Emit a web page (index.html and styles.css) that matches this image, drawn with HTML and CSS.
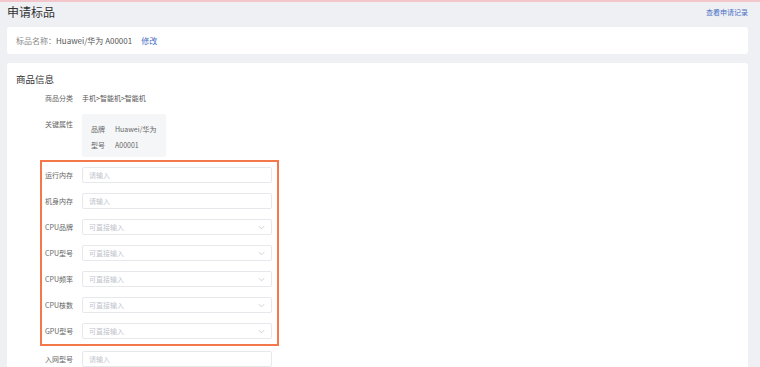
FILE: index.html
```html
<!DOCTYPE html>
<html lang="zh-CN">
<head>
    <meta charset="UTF-8">
    <meta name="viewport" content="width=device-width, initial-scale=1.0">
    <title>申请标品</title>
    <link rel="stylesheet" href="styles.css">
</head>
<body>
    <div class="page">
        <div class="page-header">
            <h1>申请标品</h1>
            <a href="#" class="history-link">查看申请记录</a>
        </div>

        <div class="card name-card">
            <span class="muted">标品名称：</span>
            <span class="value">Huawei/华为 A00001</span>
            <a href="#" class="edit-link">修改</a>
        </div>

        <div class="card info-card">
            <h2>商品信息</h2>

            <div class="form">
                <div class="row row-text">
                    <span class="label">商品分类</span>
                    <span class="value">手机&gt;智能机&gt;智能机</span>
                </div>

                <div class="row row-attrs">
                    <span class="label">关键属性</span>
                    <div class="attr-box">
                        <div class="attr"><span class="attr-name">品牌</span><span>Huawei/华为</span></div>
                        <div class="attr"><span class="attr-name">型号</span><span>A00001</span></div>
                    </div>
                </div>

                <div class="highlight">
                    <div class="row">
                        <label class="label">运行内存</label>
                        <input type="text" placeholder="请输入">
                    </div>
                    <div class="row">
                        <label class="label">机身内存</label>
                        <input type="text" placeholder="请输入">
                    </div>
                    <div class="row">
                        <label class="label">CPU品牌</label>
                        <div class="select"><span>可直接输入</span><svg viewBox="0 0 8 5"><path d="M1 1l3 3 3-3"/></svg></div>
                    </div>
                    <div class="row">
                        <label class="label">CPU型号</label>
                        <div class="select"><span>可直接输入</span><svg viewBox="0 0 8 5"><path d="M1 1l3 3 3-3"/></svg></div>
                    </div>
                    <div class="row">
                        <label class="label">CPU频率</label>
                        <div class="select"><span>可直接输入</span><svg viewBox="0 0 8 5"><path d="M1 1l3 3 3-3"/></svg></div>
                    </div>
                    <div class="row">
                        <label class="label">CPU核数</label>
                        <div class="select"><span>可直接输入</span><svg viewBox="0 0 8 5"><path d="M1 1l3 3 3-3"/></svg></div>
                    </div>
                    <div class="row">
                        <label class="label">GPU型号</label>
                        <div class="select"><span>可直接输入</span><svg viewBox="0 0 8 5"><path d="M1 1l3 3 3-3"/></svg></div>
                    </div>
                </div>

                <div class="row row-plain">
                    <label class="label">入网型号</label>
                    <input type="text" placeholder="请输入">
                </div>
            </div>
        </div>
    </div>
</body>
</html>
```

FILE: styles.css
```css
body {
    font-family: "Noto Sans CJK SC", "Noto Sans", sans-serif;
    background-color: #eef0f4;
    border-top: 2px solid #f2c6ca;
    margin: 0;
    height: 365px;
    overflow: hidden;
    color: #333;
}

a {
    color: #4a6fc4;
    text-decoration: none;
}

.page {
    padding: 0 12px 0 7px;
}

.page-header {
    display: flex;
    justify-content: space-between;
    align-items: flex-start;
    height: 23px;
    padding-top: 2px;
}

.page-header h1 {
    margin: 0;
    font-size: 12px;
    line-height: 16px;
    font-weight: normal;
    color: #333;
}

.history-link {
    font-size: 7px;
    line-height: 16px;
}

.card {
    background-color: #fff;
    border-radius: 3px;
}

.name-card {
    height: 27px;
    display: flex;
    align-items: center;
    padding-left: 9px;
    font-size: 8px;
}

.muted {
    color: #888;
}

.name-card .value {
    color: #555;
}

.edit-link {
    margin-left: 9px;
}

.info-card {
    margin-top: 9px;
    padding: 9px 9px 20px;
}

.info-card h2 {
    margin: 0;
    font-size: 9.5px;
    font-weight: normal;
    line-height: 14px;
    color: #333;
}

.form {
    margin-left: 24px;
    width: 239px;
    font-size: 7px;
}

.row {
    display: flex;
    align-items: center;
    height: 26px;
    padding-left: 5px;
}

.label {
    width: 37px;
    flex-shrink: 0;
    color: #666;
}

.row-text {
    height: 16px;
    margin-top: 4px;
}

.row-text .value {
    color: #555;
}

.row-attrs {
    align-items: flex-start;
    height: auto;
    margin-top: 8px;
}

.row-attrs .label {
    padding-top: 2px;
    line-height: 16px;
}

.attr-box {
    background-color: #f5f6f8;
    border-radius: 2px;
    padding: 7px 10px 4px 9px;
    white-space: nowrap;
}

.attr {
    display: flex;
    line-height: 16px;
    color: #666;
}

.attr-name {
    width: 24px;
}

.highlight {
    margin-top: 3px;
    border: 2px solid #f4784a;
    padding: 0 5px 0 3px;
    width: 227px;
}

.highlight .row {
    padding-left: 0;
}

input[type="text"],
.select {
    box-sizing: border-box;
    width: 190px;
    height: 16px;
    border: 1px solid #e6e8ec;
    border-radius: 2px;
    padding: 0 6px;
    font-family: inherit;
    font-size: 7px;
    color: #333;
    outline: none;
}

input::placeholder {
    color: #c0c4cc;
}

.select {
    display: flex;
    align-items: center;
    justify-content: space-between;
    color: #c0c4cc;
}

.select svg {
    width: 7px;
    height: 5px;
    fill: none;
    stroke: #c6c9cf;
    stroke-width: 1;
}

.row-plain {
    padding-left: 5px;
}
```
